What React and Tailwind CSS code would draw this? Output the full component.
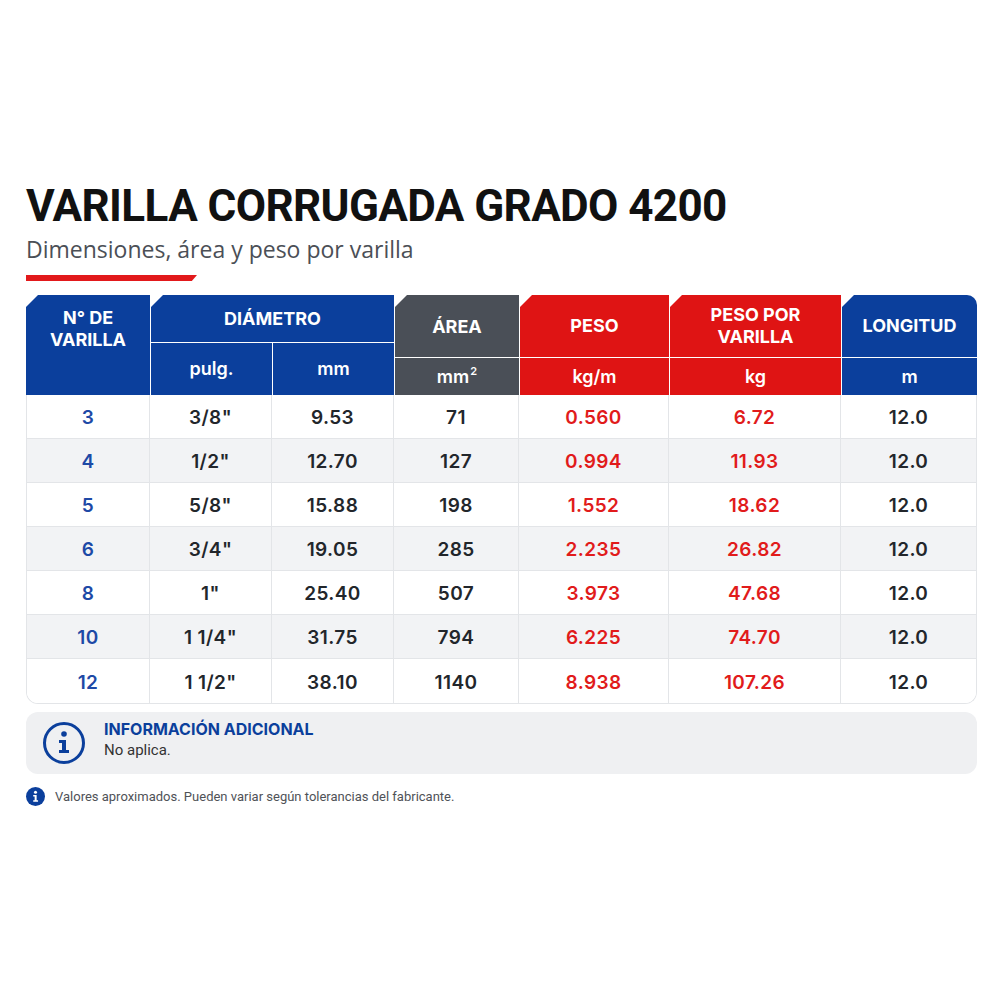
import React from "react";

const rows = [
    ["3", '3/8"', "9.53", "71", "0.560", "6.72", "12.0"],
    ["4", '1/2"', "12.70", "127", "0.994", "11.93", "12.0"],
    ["5", '5/8"', "15.88", "198", "1.552", "18.62", "12.0"],
    ["6", '3/4"', "19.05", "285", "2.235", "26.82", "12.0"],
    ["8", '1"', "25.40", "507", "3.973", "47.68", "12.0"],
    ["10", '1 1/4"', "31.75", "794", "6.225", "74.70", "12.0"],
    ["12", '1 1/2"', "38.10", "1140", "8.938", "107.26", "12.0"],
];

const cut = "[clip-path:polygon(12px_0,100%_0,100%_100%,0_100%,0_12px)]";

const InfoOutline = () => (
    <svg width="44" height="44" viewBox="0 0 44 44" fill="none">
        <circle cx="22" cy="22" r="19.5" stroke="#0b3f9c" strokeWidth="3" />
        <circle cx="22" cy="13" r="2.8" fill="#0b3f9c" />
        <path d="M17 19h7v10h3v3H17v-3h3v-7h-3z" fill="#0b3f9c" />
    </svg>
);

const InfoSolid = () => (
    <svg width="19" height="19" viewBox="0 0 20 20">
        <circle cx="10" cy="10" r="10" fill="#0b3f9c" />
        <circle cx="10" cy="5.6" r="1.6" fill="#fff" />
        <path d="M7.6 8.3h3.6v5.6h1.5v1.7H7.6v-1.7h1.5v-3.9H7.6z" fill="#fff" />
    </svg>
);

const App = () => {
    return (
        <div className="w-[1000px] h-[1000px] bg-white font-['Roboto',sans-serif]">
            <div className="pt-[178px] pl-[26px] pr-[23px]">
                <h1 className="text-[44px] leading-[56px] font-bold text-[#111] tracking-[-0.6px]">
                    VARILLA CORRUGADA GRADO 4200
                </h1>
                <p className="mt-[1px] text-[23px] leading-[28px] text-[#4b4f56] font-['Open_Sans',sans-serif]">
                    Dimensiones, área y peso por varilla
                </p>
                <div className="mt-[12px] w-[171px] h-[6px] bg-[#e2191b] [clip-path:polygon(0_0,100%_0,97%_100%,0_100%)]"></div>

                {/* header */}
                <div className="mt-[14px] grid grid-cols-[124px_243px_124px_149px_171px_135px] gap-x-px h-[100px] text-white font-bold text-[18px] leading-[22px] font-['Inter',sans-serif]">
                    <div className={`bg-[#0b3f9c] flex items-start justify-center pt-[12px] text-center ${cut}`}>
                        N° DE<br />VARILLA
                    </div>
                    <div className="flex flex-col gap-y-px">
                        <div className={`h-[47px] bg-[#0b3f9c] flex items-center justify-center ${cut}`}>DIÁMETRO</div>
                        <div className="flex-1 grid grid-cols-2 gap-x-px font-semibold">
                            <div className="bg-[#0b3f9c] flex items-center justify-center">pulg.</div>
                            <div className="bg-[#0b3f9c] flex items-center justify-center">mm</div>
                        </div>
                    </div>
                    <div className="flex flex-col gap-y-px">
                        <div className={`h-[62px] bg-[#4a4f57] flex items-center justify-center pt-[2px] ${cut}`}>ÁREA</div>
                        <div className="flex-1 bg-[#4a4f57] flex items-center justify-center font-semibold">
                            mm<sup className="text-[11px] -top-[6px] ml-[1px]">2</sup>
                        </div>
                    </div>
                    <div className="flex flex-col gap-y-px">
                        <div className={`h-[62px] bg-[#df1414] flex items-center justify-center ${cut}`}>PESO</div>
                        <div className="flex-1 bg-[#df1414] flex items-center justify-center font-semibold">kg/m</div>
                    </div>
                    <div className="flex flex-col gap-y-px">
                        <div className={`h-[62px] bg-[#df1414] flex items-center justify-center text-center ${cut}`}>
                            PESO POR<br />VARILLA
                        </div>
                        <div className="flex-1 bg-[#df1414] flex items-center justify-center font-semibold">kg</div>
                    </div>
                    <div className="flex flex-col gap-y-px">
                        <div className={`h-[62px] bg-[#0b3f9c] flex items-center justify-center rounded-tr-[10px] ${cut}`}>LONGITUD</div>
                        <div className="flex-1 bg-[#0b3f9c] flex items-center justify-center font-semibold">m</div>
                    </div>
                </div>

                {/* body */}
                <div className="border border-t-0 border-[#e3e5e8] rounded-b-[12px] overflow-hidden font-['Inter',sans-serif]">
                    {rows.map((r, i) => (
                        <div
                            key={i}
                            className={`grid grid-cols-[123px_122px_122px_125px_150px_172px_135px] h-[44px] text-[19px] font-semibold tracking-[0.4px] ${i % 2 ? "bg-[#f2f3f5]" : "bg-white"} ${i < rows.length - 1 ? "border-b border-[#e3e5e8]" : ""}`}
                        >
                            {r.map((v, j) => (
                                <div
                                    key={j}
                                    className={`flex items-center justify-center pt-[4px] ${j < 6 ? "border-r border-[#e3e5e8]" : ""} ${j === 0 ? "text-[#1d49a6]" : j === 4 || j === 5 ? "text-[#e11b1b]" : "text-[#22262b]"}`}
                                >
                                    {v}
                                </div>
                            ))}
                        </div>
                    ))}
                </div>

                {/* additional info */}
                <div className="mt-[8px] h-[62px] bg-[#eff0f2] rounded-[12px] flex items-center pl-[16px] gap-[18px]">
                    <InfoOutline />
                    <div className="pb-[6px]">
                        <p className="text-[16px] leading-[21px] font-bold text-[#0b3f9c] font-['Inter',sans-serif]">INFORMACIÓN ADICIONAL</p>
                        <p className="text-[15px] leading-[21px] text-[#333]">No aplica.</p>
                    </div>
                </div>

                <div className="mt-[13px] flex items-center gap-[10px]">
                    <InfoSolid />
                    <p className="text-[13px] text-[#4f5257]">
                        Valores aproximados. Pueden variar según tolerancias del fabricante.
                    </p>
                </div>
            </div>
        </div>
    );
};

export default App;
